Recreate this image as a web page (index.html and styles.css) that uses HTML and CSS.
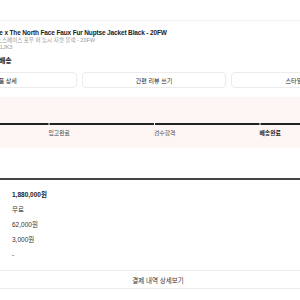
FILE: index.html
```html
<!DOCTYPE html>
<html lang="ko">
<head>
  <meta charset="UTF-8">
  <title>구매 내역 상세</title>
  <link rel="stylesheet" href="styles.css">
</head>
<body>
  <div class="page">
    <div class="topbar"></div>

    <div class="product">
      <p class="product-name">Supreme x The North Face Faux Fur Nuptse Jacket Black - 20FW</p>
      <p class="product-ko">슈프림 x 노스페이스 포우 퍼 눕시 자켓 블랙 - 20FW</p>
      <p class="product-code">NF0A46V1JK3</p>
    </div>

    <h2 class="ship-title">일반배송</h2>

    <div class="actions">
      <button class="action">상품 상세</button>
      <button class="action">간편 리뷰 쓰기</button>
      <button class="action">스타일 올리기</button>
    </div>

    <div class="progress">
      <div class="track"></div>
      <div class="steps">
        <span class="step">발송완료</span>
        <span class="step">입고완료</span>
        <span class="step">검수합격</span>
        <span class="step current">배송완료</span>
      </div>
    </div>

    <div class="payment">
      <div class="pay-row total">1,880,000원</div>
      <div class="pay-row">무료</div>
      <div class="pay-row">62,000원</div>
      <div class="pay-row">3,000원</div>
      <div class="pay-row">-</div>
    </div>

    <button class="detail-link">결제 내역 상세보기</button>
  </div>
</body>
</html>
```

FILE: styles.css
```css
body {
  margin: 0;
  overflow: hidden;
  background: #fff;
  color: #222;
  font-family: 'Liberation Sans', 'Noto Sans CJK KR', sans-serif;
}
/* the page is wider than the window and scrolled a little to the right */
.page {
  width: 450px;
  margin-left: -67px;
}
.topbar {
  height: 20px;
  border-bottom: 1px solid #f2f2f2;
}
.product {
  padding: 8px 0 0 43px;
}
.product p {
  margin: 0;
}
.product-name {
  font-size: 6.5px;
  font-weight: bold;
  line-height: 8px;
  letter-spacing: -0.15px;
}
.product-ko {
  font-size: 5.5px;
  line-height: 7px;
  color: #999;
}
.product-code {
  font-size: 5.5px;
  line-height: 7px;
  color: #999;
}
.ship-title {
  margin: 5px 0 0 53px;
  font-size: 7px;
  line-height: 9px;
  font-weight: bold;
}
.actions {
  display: grid;
  grid-template-columns: repeat(3, 144px);
  gap: 5px;
  margin-top: 7px;
}
.action {
  height: 16px;
  padding: 0;
  border: 1px solid #ebebeb;
  border-radius: 4px;
  background: #fff;
  color: #222;
  font-family: inherit;
  font-size: 6px;
}
.progress {
  position: relative;
  margin-top: 9px;
  height: 51px;
  background: #fef6f5;
}
.track {
  position: absolute;
  left: 0;
  right: 0;
  top: 26px;
  height: 2px;
  background: linear-gradient(to right, #fef6f5 0 1px, #222 1px);
  background-size: 105.5px 100%;
  background-position: 10px 0;
}
.steps {
  display: grid;
  grid-template-columns: repeat(4, 105.5px);
  padding: 32px 0 0 10px;
}
.step {
  font-size: 5.8px;
  line-height: 8px;
  color: #444;
}
.step.current {
  font-weight: bold;
  color: #222;
}
.payment {
  margin-top: 30px;
  padding: 7px 0 8px 79px;
  border-top: 2px solid #444;
}
.pay-row {
  font-size: 6.5px;
  line-height: 15px;
  color: #333;
}
.pay-row.total {
  font-weight: bold;
  color: #222;
}
.detail-link {
  display: block;
  width: 100%;
  height: 19px;
  padding: 0;
  border: none;
  border-top: 1px solid #ebebeb;
  border-bottom: 1px solid #ebebeb;
  background: #fff;
  color: #333;
  font-family: inherit;
  font-size: 6.5px;
}
```
